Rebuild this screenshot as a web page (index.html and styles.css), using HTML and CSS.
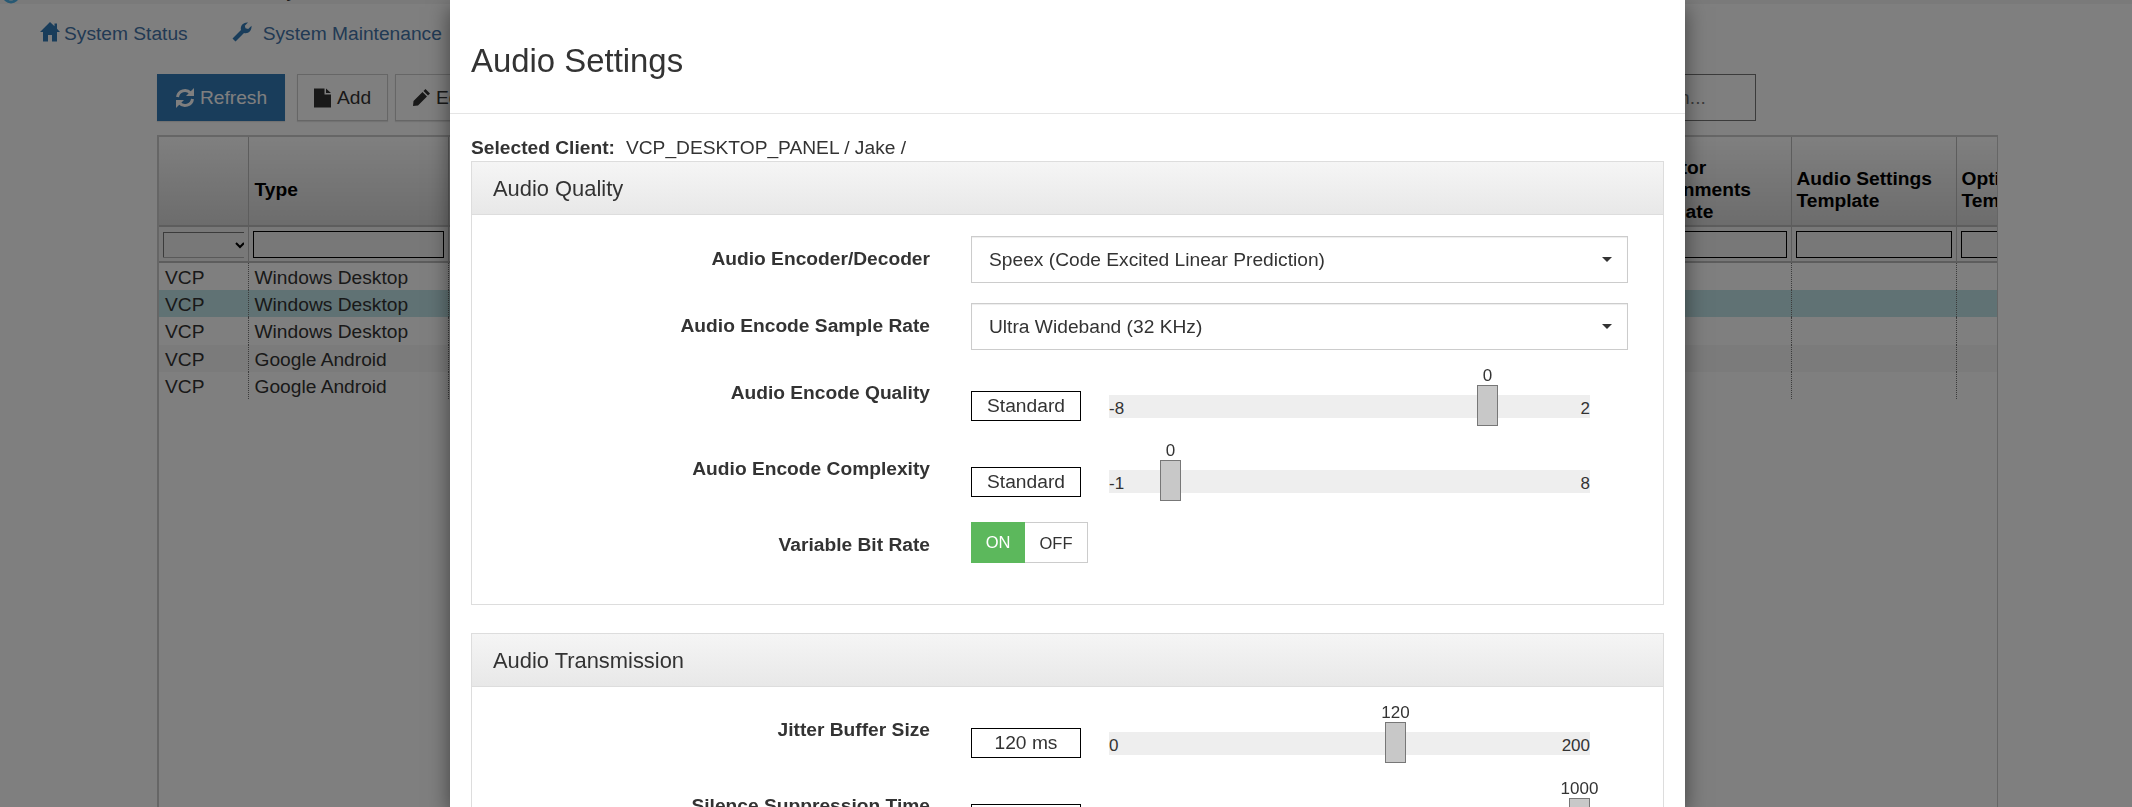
FILE: index.html
```html
<!DOCTYPE html>
<html lang="en">
<head>
<meta charset="utf-8">
<title>Audio Settings</title>
<link rel="stylesheet" href="styles.css">
</head>
<body>
<div class="page">
  <div class="topbar">
    <svg class="logo-arc" width="20" height="20" viewBox="0 0 20 20"><circle cx="11" cy="-5" r="7" fill="none" stroke="#4fb3e8" stroke-width="3"/></svg>
    <span class="brand">Gateway</span>
  </div>
  <nav class="nav">
    <a class="nav-item">
      <svg class="nav-icon" width="20" height="20" viewBox="0 0 20 20"><path d="M10 0 14.5 4.300V1.500H17V6.800L20 10H17V19.500H12V13H8V19.500H3V10H0Z"/></svg>
      System Status
    </a>
    <a class="nav-item nav-item-wide">
      <svg class="nav-icon" width="20" height="20" viewBox="0 0 20 20"><path d="M0.500 16.500 9 8C8 4 11 0 16 0.500L12.800 3.700 13.500 6.300 16.200 7 19.500 3.800C20 9 16 12.200 12 11L3.500 19.500Z"/></svg>
      System Maintenance
    </a>
  </nav>
  <div class="toolbar">
    <button class="btn btn-primary">
      <svg width="20" height="20" viewBox="0 0 20 20" fill="none" stroke="currentColor" stroke-width="3"><path d="M2.500 9A7.500 7.500 0 0 1 15.500 5"/><path d="M17.500 11A7.500 7.500 0 0 1 4.500 15"/><path d="M19 0V8H11Z" fill="currentColor" stroke="none"/><path d="M1 20V12H9Z" fill="currentColor" stroke="none"/></svg>
      Refresh
    </button>
    <button class="btn btn-add">
      <svg width="17" height="20" viewBox="0 0 17 20"><path d="M0 0.500H10.500V6.500H17V19.500H0ZM12 0.500 17 5H12Z" fill="currentColor"/></svg>
      Add
    </button>
    <button class="btn btn-edit">
      <svg width="17" height="17" viewBox="0 0 17 17"><path d="M12.500 0 17 4.500 15 6.500 10.500 2ZM9.500 3 14 7.500 5 16.500 0 17 0.500 12Z" fill="currentColor"/></svg>
      Edit
    </button>
    <input class="search" type="text" placeholder="Search...">
  </div>
  <div class="table-wrap">
    <table class="grid">
      <colgroup>
        <col class="col-a"><col class="col-b"><col class="col-c"><col class="col-d"><col class="col-e"><col class="col-f">
      </colgroup>
      <thead>
        <tr class="head-row">
          <th></th><th class="th-type">Type</th><th>Name</th><th>Selector<br>Assignments<br>Template</th><th>Audio Settings<br>Template</th><th>Options<br>Template</th>
        </tr>
        <tr class="filter-row">
          <th><select class="filter-select"><option></option></select></th>
          <th><input class="filter-input" type="text"></th>
          <th><input class="filter-input" type="text"></th>
          <th><input class="filter-input" type="text"></th>
          <th><input class="filter-input" type="text"></th>
          <th><input class="filter-input filter-cut" type="text"></th>
        </tr>
      </thead>
      <tbody>
        <tr><td>VCP</td><td>Windows Desktop</td><td></td><td></td><td></td><td></td></tr>
        <tr class="row-selected"><td>VCP</td><td>Windows Desktop</td><td></td><td></td><td></td><td></td></tr>
        <tr><td>VCP</td><td>Windows Desktop</td><td></td><td></td><td></td><td></td></tr>
        <tr class="row-alt"><td>VCP</td><td>Google Android</td><td></td><td></td><td></td><td></td></tr>
        <tr><td>VCP</td><td>Google Android</td><td></td><td></td><td></td><td></td></tr>
      </tbody>
    </table>
  </div>
</div>

<div class="backdrop"></div>

<div class="modal">
  <header class="modal-header"><h4 class="modal-title">Audio Settings</h4></header>
  <div class="modal-body">
    <div class="client"><b>Selected Client:</b><span class="client-value">VCP_DESKTOP_PANEL / Jake /</span></div>

    <section class="panel">
      <h5 class="panel-heading">Audio Quality</h5>
      <div class="panel-body">
        <div class="row row-select">
          <label class="label">Audio Encoder/Decoder</label>
          <div class="select-wrap"><select class="select"><option>Speex (Code Excited Linear Prediction)</option></select></div>
        </div>
        <div class="row row-select">
          <label class="label">Audio Encode Sample Rate</label>
          <div class="select-wrap"><select class="select"><option>Ultra Wideband (32 KHz)</option></select></div>
        </div>
        <div class="row row-slider">
          <label class="label">Audio Encode Quality</label>
          <div class="value-box">Standard</div>
          <div class="track"><span>-8</span><span>2</span>
            <div class="handle" style="left:368px"><span class="handle-value">0</span></div>
          </div>
        </div>
        <div class="row row-slider">
          <label class="label">Audio Encode Complexity</label>
          <div class="value-box">Standard</div>
          <div class="track track-up"><span>-1</span><span>8</span>
            <div class="handle" style="left:51px"><span class="handle-value">0</span></div>
          </div>
        </div>
        <div class="row row-toggle">
          <label class="label">Variable Bit Rate</label>
          <div class="toggle"><span class="toggle-on">ON</span><span class="toggle-off">OFF</span></div>
        </div>
      </div>
    </section>

    <section class="panel">
      <h5 class="panel-heading">Audio Transmission</h5>
      <div class="panel-body">
        <div class="row row-slider">
          <label class="label">Jitter Buffer Size</label>
          <div class="value-box">120 ms</div>
          <div class="track"><span>0</span><span>200</span>
            <div class="handle" style="left:276px"><span class="handle-value">120</span></div>
          </div>
        </div>
        <div class="row row-slider">
          <label class="label">Silence Suppression Time</label>
          <div class="value-box">1000 ms</div>
          <div class="track"><span>0</span><span>1000</span>
            <div class="handle" style="left:460px"><span class="handle-value">1000</span></div>
          </div>
        </div>
      </div>
    </section>
  </div>
</div>
</body>
</html>
```

FILE: styles.css
```css
* { box-sizing: border-box; }

html, body {
  margin: 0;
  height: 807px;
  overflow: hidden;
}

body {
  background: #fff;
  color: #333;
  font: 19.2px/26px "Liberation Sans", Arial, sans-serif;
}

/* ---------- page behind the dialog ---------- */
.page {
  height: 807px;
  overflow: hidden;
}

.topbar {
  display: flex;
  height: 4px;
  overflow: hidden;
  background: #f4f4f4;
  position: relative;
}

.logo-arc {
  flex: none;
}

.brand {
  width: 276px;
  flex: none;
  margin-top: -22px;
  text-align: right;
  color: #333;
}

.nav {
  display: flex;
  height: 70px;
  padding: 17px 0 0 40px;
}

.nav-item {
  display: flex;
  align-items: flex-start;
  gap: 4px;
  color: #4474a8;
  line-height: 26px;
}

.nav-item-wide {
  margin-left: 44px;
  gap: 11px;
}

.nav-icon {
  margin-top: 1px;
  fill: #337ab7;
}

.toolbar {
  display: flex;
  width: 1599px;
  height: 47px;
  margin-left: 157px;
}

.btn {
  display: flex;
  align-items: center;
  justify-content: center;
  height: 47px;
  padding: 0;
  border: 1px solid #ccc;
  background: #fff;
  color: #333;
  font: inherit;
  box-shadow: 0 1px 1px rgba(0, 0, 0, 0.1);
}

.btn-primary {
  width: 128px;
  gap: 5px;
  border-color: #337ab7;
  background: #337ab7;
  color: #fff;
}

.btn-add {
  width: 91px;
  margin-left: 12px;
  gap: 6px;
}

.btn-edit {
  width: 110px;
  margin-left: 7px;
  padding-left: 17px;
  justify-content: flex-start;
  gap: 6px;
}

.search {
  width: 140px;
  height: 47px;
  margin-left: auto;
  padding: 0 12px;
  border: 1px solid #777;
  font: inherit;
}

.search::placeholder {
  color: #777;
}

.table-wrap {
  width: 1841px;
  height: 700px;
  margin: 14px 0 0 157px;
  border: 2px solid #ccc;
  border-width: 2px 1px 0 2px;
  overflow: hidden;
}

.grid {
  width: 1930px;
  table-layout: fixed;
  border-collapse: collapse;
  color: #333;
}

.col-a { width: 89px; }
.col-b { width: 200px; }
.col-c { width: 1177px; }
.col-d { width: 166px; }
.col-e { width: 165px; }
.col-f { width: 133px; }

.head-row th {
  height: 89px;
  padding: 18px 5px 0;
  border-right: 1px solid #bbb;
  border-bottom: 2px solid #bbb;
  background: linear-gradient(#fff, #d9d9d9);
  color: #000;
  font-weight: bold;
  line-height: 22px;
  text-align: left;
  vertical-align: middle;
}

.head-row .th-type {
  padding-left: 6px;
}

.filter-row th {
  height: 36px;
  padding: 1px 4px 0;
  border-right: 1px solid #bbb;
  border-bottom: 2px solid #bbb;
  background: #f0f0f0;
}

.filter-input {
  display: block;
  width: 100%;
  height: 27px;
  border: 1px solid #000;
  background: transparent;
}

.filter-cut {
  width: 200px;
}

.filter-select {
  display: block;
  width: 86px;
  height: 26px;
  background: transparent;
  clip-path: inset(0 5px 0 0);
}

.grid td {
  height: 27.330px;
  padding: 2px 0 0 6px;
  border-right: 1px dotted #777;
  line-height: 25px;
  white-space: nowrap;
}

.row-selected td {
  background: #c0e5e8;
}

.row-alt td {
  background: #f7f7f7;
}

/* ---------- overlay ---------- */
.backdrop {
  position: fixed;
  inset: 0;
  background: rgba(0, 0, 0, 0.5);
}

.modal {
  position: absolute;
  top: 0;
  left: 450px;
  width: 1235px;
  height: 807px;
  overflow: hidden;
  background: #fff;
  box-shadow: 0 7px 21px rgba(0, 0, 0, 0.5);
}

.modal-header {
  display: flex;
  align-items: center;
  height: 114px;
  padding: 9px 21px 0;
  border-bottom: 1px solid #e5e5e5;
}

.modal-title {
  margin: 0;
  font-size: 32.900px;
  font-weight: normal;
  line-height: 40px;
}

.modal-body {
  padding: 0 21px;
}

.client {
  display: flex;
  height: 47px;
  padding-top: 21px;
}

.client-value {
  margin-left: 11px;
}

.panel {
  margin-bottom: 28px;
  border: 1px solid #ddd;
}

.panel-heading {
  height: 53px;
  margin: 0;
  padding: 0 21px;
  border-bottom: 1px solid #ddd;
  background: linear-gradient(#f5f5f5, #e8e8e8);
  font-size: 21.900px;
  font-weight: normal;
  line-height: 53px;
}

.panel-body {
  padding: 17px 0 41px;
}

.row {
  display: flex;
  align-items: flex-start;
}

.label {
  flex: none;
  width: 458px;
  margin-right: 41px;
  padding-top: 13px;
  font-weight: bold;
  text-align: right;
}

.row-select {
  height: 64px;
}

.row-select:first-child {
  height: 71px;
  padding-top: 4px;
}

.row-select .label {
  padding-top: 10px;
}

.select-wrap {
  position: relative;
  width: 657px;
  height: 47px;
}

.select-wrap::after {
  content: "";
  position: absolute;
  top: 21px;
  right: 16px;
  border: 5px solid transparent;
  border-top-color: #333;
  border-bottom: 0;
}

.select {
  display: block;
  width: 100%;
  height: 100%;
  padding: 0 17px;
  border: 1px solid #ccc;
  border-radius: 0;
  background: #fff;
  color: #333;
  font: inherit;
  appearance: none;
  box-shadow: inset 0 1px 1px rgba(0, 0, 0, 0.075);
}

.row-slider {
  height: 76px;
}

.value-box {
  flex: none;
  width: 110px;
  height: 30px;
  margin-top: 24px;
  border: 1px solid #000;
  line-height: 28px;
  text-align: center;
}

.track {
  position: relative;
  display: flex;
  justify-content: space-between;
  flex: none;
  width: 481px;
  height: 23px;
  margin: 28px 0 0 28px;
  background: #eee;
  font-size: 17px;
  line-height: 28px;
}

.track-up {
  margin-top: 27px;
}

.handle {
  position: absolute;
  top: -10px;
  width: 21px;
  height: 41px;
  border: 1px solid #777;
  background: #c8c8c8;
}

.handle-value {
  position: absolute;
  bottom: 100%;
  left: 50%;
  transform: translateX(-50%);
  line-height: 20px;
}

.row-toggle {
  height: 44px;
}

.toggle {
  display: flex;
  height: 41px;
  margin-top: 3px;
  font-size: 16.500px;
  line-height: 40px;
}

.toggle-on {
  width: 54px;
  background: #5cb85c;
  color: #fff;
  text-align: center;
}

.toggle-off {
  width: 63px;
  border: 1px solid #ccc;
  border-left: 0;
  text-align: center;
}
```
